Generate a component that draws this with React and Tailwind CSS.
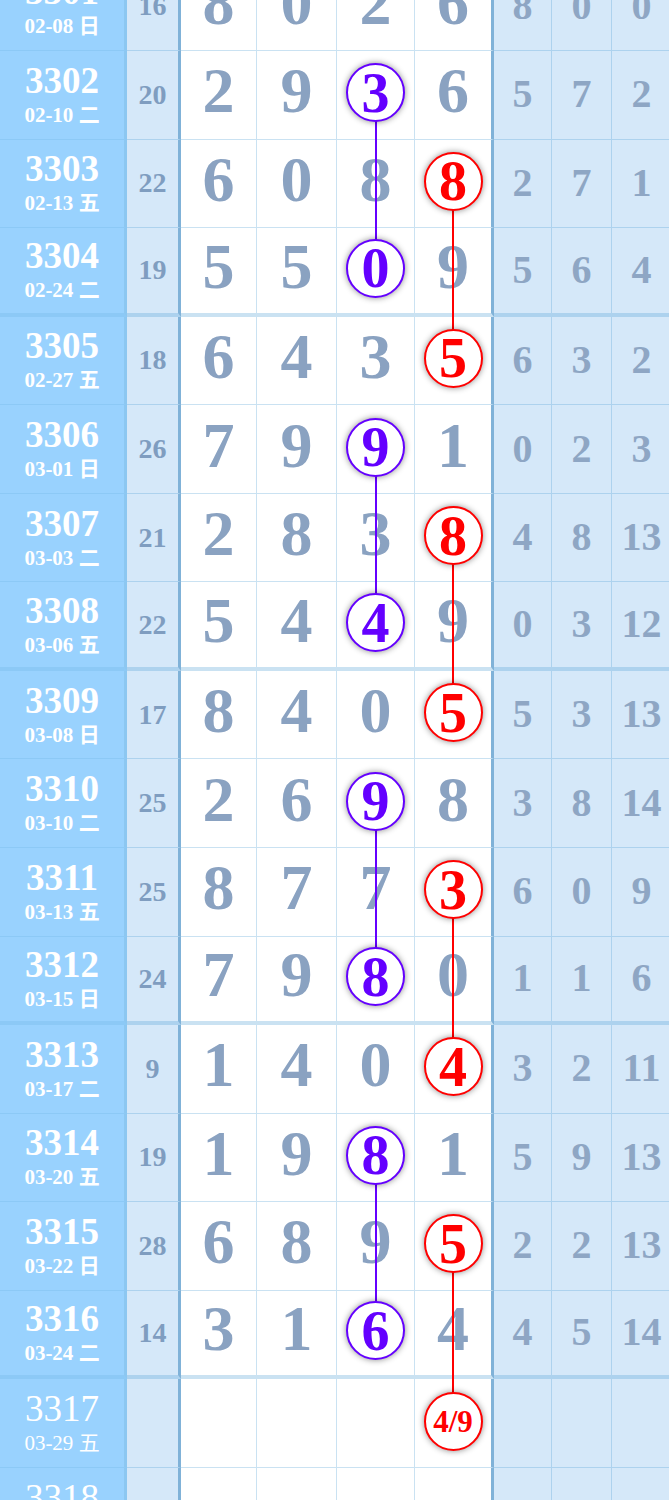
import React from "react";

const ROW_H = 88.56;

const rows = [
  { no: "3301", date: "02-08", wd: "日", sum: "16", d: [8, 0, 2, 6], r: [8, 0, 0] },
  { no: "3302", date: "02-10", wd: "二", sum: "20", d: [2, 9, 3, 6], r: [5, 7, 2], hit: 2 },
  { no: "3303", date: "02-13", wd: "五", sum: "22", d: [6, 0, 8, 8], r: [2, 7, 1], hit: 3 },
  { no: "3304", date: "02-24", wd: "二", sum: "19", d: [5, 5, 0, 9], r: [5, 6, 4], hit: 2 },
  { no: "3305", date: "02-27", wd: "五", sum: "18", d: [6, 4, 3, 5], r: [6, 3, 2], hit: 3 },
  { no: "3306", date: "03-01", wd: "日", sum: "26", d: [7, 9, 9, 1], r: [0, 2, 3], hit: 2 },
  { no: "3307", date: "03-03", wd: "二", sum: "21", d: [2, 8, 3, 8], r: [4, 8, 13], hit: 3 },
  { no: "3308", date: "03-06", wd: "五", sum: "22", d: [5, 4, 4, 9], r: [0, 3, 12], hit: 2 },
  { no: "3309", date: "03-08", wd: "日", sum: "17", d: [8, 4, 0, 5], r: [5, 3, 13], hit: 3 },
  { no: "3310", date: "03-10", wd: "二", sum: "25", d: [2, 6, 9, 8], r: [3, 8, 14], hit: 2 },
  { no: "3311", date: "03-13", wd: "五", sum: "25", d: [8, 7, 7, 3], r: [6, 0, 9], hit: 3 },
  { no: "3312", date: "03-15", wd: "日", sum: "24", d: [7, 9, 8, 0], r: [1, 1, 6], hit: 2 },
  { no: "3313", date: "03-17", wd: "二", sum: "9", d: [1, 4, 0, 4], r: [3, 2, 11], hit: 3 },
  { no: "3314", date: "03-20", wd: "五", sum: "19", d: [1, 9, 8, 1], r: [5, 9, 13], hit: 2 },
  { no: "3315", date: "03-22", wd: "日", sum: "28", d: [6, 8, 9, 5], r: [2, 2, 13], hit: 3 },
  { no: "3316", date: "03-24", wd: "二", sum: "14", d: [3, 1, 6, 4], r: [4, 5, 14], hit: 2 },
  { no: "3317", date: "03-29", wd: "五", sum: "", d: ["", "", "", "4/9"], r: ["", "", ""], hit: 3, next: true },
  { no: "3318", date: "03-31", wd: "日", sum: "", d: ["", "", "", ""], r: ["", "", ""], next: true },
];

// connecting lines between drawn balls (row index pairs)
const links = [
  { color: "#6400ff", x: 376, pairs: [[1, 3], [5, 7], [9, 11], [13, 15]] },
  { color: "#ff0000", x: 453, pairs: [[2, 4], [6, 8], [10, 12], [14, 16]] },
];

const serif = "font-['Liberation_Serif','Noto_Sans_CJK_SC',serif]";

function Ball({ value, purple, small }) {
  return (
    <span
      className={
        "relative z-20 flex h-[59px] w-[59px] items-center justify-center rounded-full border-[2.5px] bg-white font-bold shadow-[0_0_6px_rgba(0,0,0,0.45)] " +
        (purple ? "border-[#6400ff] text-[#6400ff] " : "border-[#ff0000] text-[#ff0000] ") +
        (small ? "text-[31px] leading-none" : "text-[56px] leading-none")
      }
    >
      {value}
    </span>
  );
}

function Row({ row, idx }) {
  const thick = idx % 4 === 3;
  const line = thick ? "border-b-[4px]" : "border-b-[1.5px]";
  const bc = "border-b-[rgba(90,165,215,0.32)]";
  const widths = ["w-[76px]", "w-[80px]", "w-[78px]", "w-[79px]"];
  const rw = ["w-[58px]", "w-[60px]", "w-[60px]"];
  return (
    <div className="flex h-[88.56px]">
      <div
        className={`flex w-[127px] shrink-0 flex-col items-center justify-center border-r-[3px] border-r-[#8cc7f1] bg-[#99d2fe] text-white ${line} border-b-[rgba(90,165,215,0.2)] ${
          row.next ? "font-normal" : "font-bold"
        }`}
      >
        <span className="text-[37px] leading-[40px]">{row.no}</span>
        <span className="text-[21px] leading-[28px]">
          {row.date} {row.wd}
        </span>
      </div>
      <div
        className={`flex w-[54px] shrink-0 items-center justify-center border-r-[3px] border-r-[#80b2d8] bg-[#d5e8f9] text-[28px] font-bold text-[#7f9dc0] ${line} ${bc}`}
      >
        {row.sum}
      </div>
      {row.d.map((v, i) => (
        <div
          key={i}
          className={`flex shrink-0 items-center justify-center bg-white ${row.hit === i ? "pb-[4px]" : "pb-[7px]"} ${widths[i]} ${line} ${bc} ${
            i === 3 ? "border-r-[3px] border-r-[#80b2d8]" : "border-r-[1.5px] border-r-[rgba(90,165,215,0.32)]"
          }`}
        >
          {row.hit === i ? (
            <Ball value={v} purple={i === 2} small={row.next} />
          ) : (
            <span className="text-[64px] font-bold leading-none text-[#8aa2c1]">{v}</span>
          )}
        </div>
      ))}
      {row.r.map((v, i) => (
        <div
          key={i}
          className={`flex shrink-0 items-center justify-center border-r-[1.5px] border-r-[rgba(90,165,215,0.32)] bg-[#d5e8f9] pb-[1px] text-[40px] font-bold text-[#8ea6c4] ${rw[i]} ${line} ${bc}`}
        >
          {v}
        </div>
      ))}
    </div>
  );
}

export default function App() {
  const total = rows.length * ROW_H;
  const cy = (i) => i * ROW_H + 41.5;
  return (
    <div className={`h-[1500px] w-[669px] overflow-hidden bg-white ${serif}`}>
      <div className="relative -mt-[37.5px]">
        {rows.map((row, idx) => (
          <Row key={row.no} row={row} idx={idx} />
        ))}
        <svg
          className="pointer-events-none absolute left-0 top-0 z-10"
          width="669"
          height={total}
          viewBox={`0 0 669 ${total}`}
        >
          {links.map((l) =>
            l.pairs.map(([a, b]) => (
              <line key={l.color + a} x1={l.x} x2={l.x} y1={cy(a)} y2={cy(b)} stroke={l.color} strokeWidth="2" />
            ))
          )}
        </svg>
      </div>
    </div>
  );
}
